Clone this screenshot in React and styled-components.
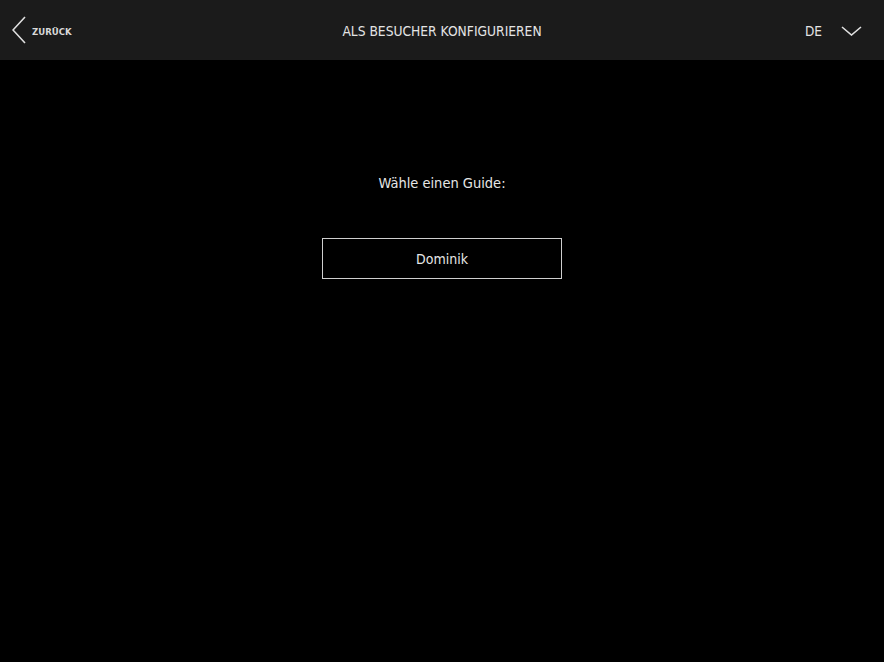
import React from "react";
import styled, { createGlobalStyle } from "styled-components";

const Global = createGlobalStyle`
  html, body { margin: 0; padding: 0; background: #000; }
  body { font-family: "DejaVu Sans Condensed", "DejaVu Sans", sans-serif; color: #e6e6e6; }
  #root { min-height: 100vh; }
`;

const Page = styled.div`
  width: 100%;
  min-height: 662px;
  background: #000;
  display: flex;
  flex-direction: column;
`;

const Header = styled.header`
  height: 60px;
  box-sizing: border-box;
  padding: 2px 12px 0;
  background: #1b1b1b;
  display: grid;
  grid-template-columns: 1fr auto 1fr;
  align-items: center;
`;

const Back = styled.button`
  justify-self: start;
  display: flex;
  align-items: center;
  gap: 6px;
  margin-top: -2px;
  background: none;
  border: 0;
  padding: 0;
  color: #d8d8d8;
  font-family: inherit;
  font-size: 9.5px;
  font-weight: bold;
  cursor: pointer;
`;

const BackLabel = styled.span`
  padding-top: 2px;
`;

const Title = styled.h1`
  margin: 0;
  font-size: 13.7px;
  font-weight: normal;
  color: #e4e4e4;
`;

const Lang = styled.div`
  justify-self: end;
  display: flex;
  align-items: center;
  gap: 19px;
  padding-right: 10px;
  font-size: 13.5px;
  color: #e4e4e4;
`;

const Main = styled.main`
  display: flex;
  flex-direction: column;
  align-items: center;
  padding-top: 115px;
`;

const Prompt = styled.p`
  margin: 0 0 47px;
  font-size: 14.5px;
  color: #e6e6e6;
`;

const GuideButton = styled.button`
  width: 240px;
  height: 41px;
  background: transparent;
  border: 1px solid #cfcfcf;
  color: #e6e6e6;
  font-family: inherit;
  font-size: 14px;
  cursor: pointer;
`;

export default function App() {
  return (
    <Page>
      <Global />
      <Header>
        <Back>
          <svg width="14" height="28" viewBox="0 0 14 28" fill="none">
            <path d="M13 1 L1 14 L13 27" stroke="#e0e0e0" strokeWidth="1.6" />
          </svg>
          <BackLabel>ZURÜCK</BackLabel>
        </Back>
        <Title>ALS BESUCHER KONFIGURIEREN</Title>
        <Lang>
          <span>DE</span>
          <svg width="21" height="10" viewBox="0 0 21 10" fill="none">
            <path d="M1 1 L10.5 9 L20 1" stroke="#e0e0e0" strokeWidth="1.6" />
          </svg>
        </Lang>
      </Header>
      <Main>
        <Prompt>Wähle einen Guide:</Prompt>
        <GuideButton>Dominik</GuideButton>
      </Main>
    </Page>
  );
}
